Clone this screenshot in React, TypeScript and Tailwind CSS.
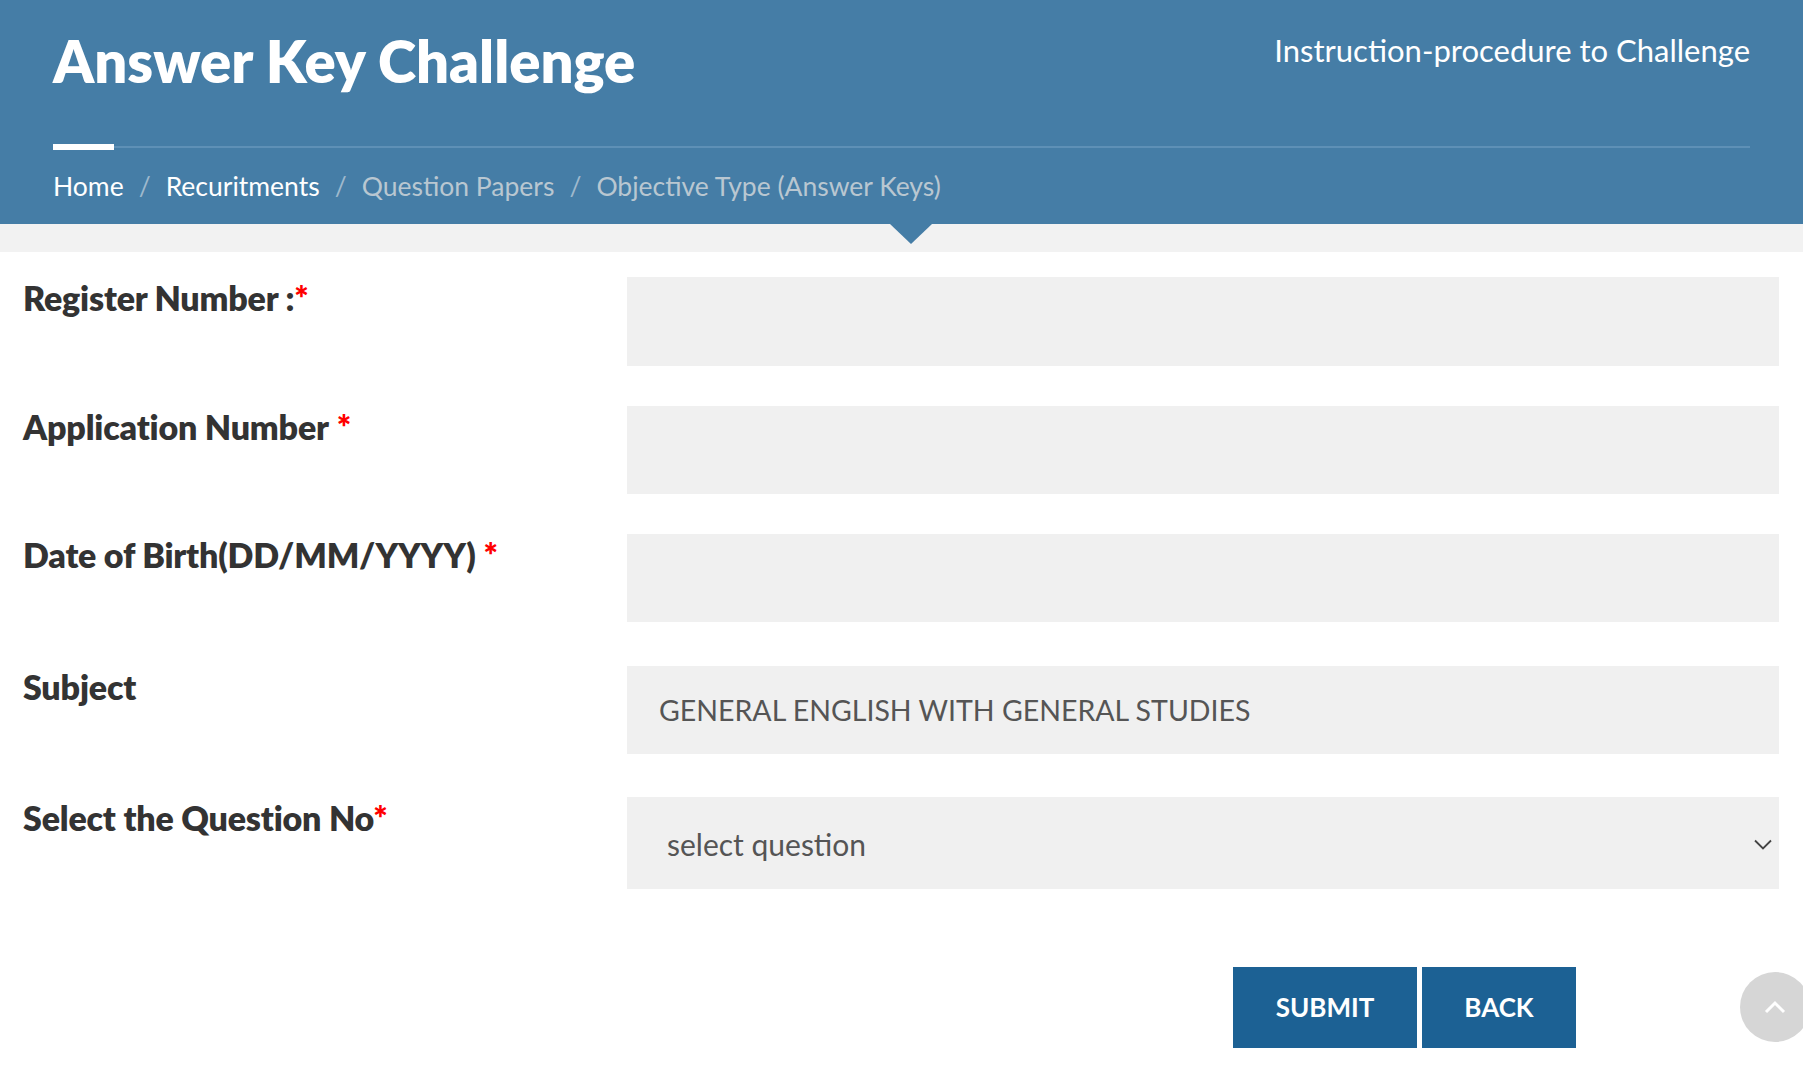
import React from "react";

const font = { fontFamily: "Lato, 'Noto Sans', sans-serif" };

function Row({ label, star, starGap, mt, h, children }: { label: string; star?: boolean; starGap?: boolean; mt: string; h: string; children?: React.ReactNode }) {
  return (
    <div className={`flex ${mt}`}>
      <div className="w-[627px] pl-[23px] pt-[1px] text-[34px] font-extrabold text-[#333333] leading-[40px] tracking-[-0.2px]">
        {label}
        {star && <span className={`text-[#ff0000] ${starGap ? "ml-[8px]" : ""}`}>*</span>}
      </div>
      <div className={`w-[1152px] ${h} bg-[#f0f0f0] flex items-center`}>{children}</div>
    </div>
  );
}

export default function App() {
  return (
    <div className="w-[1803px] h-[1074px] bg-white overflow-hidden relative" style={font}>
      <header className="bg-[#457da6] h-[224px] px-[53px] pt-[26px]">
        <div className="flex justify-between items-start">
          <h1 className="text-[58px] font-extrabold text-white leading-[70px]">Answer Key Challenge</h1>
          <a className="text-[31px] text-white leading-[40px] mt-[4px]">Instruction-procedure to Challenge</a>
        </div>
        <div className="flex items-center mt-[48px]">
          <div className="w-[61px] h-[6px] bg-white" />
          <div className="flex-1 h-[2px] bg-[#5e90b6]" />
        </div>
        <nav className="flex items-center text-[26.5px] mt-[18px] leading-[36px]">
          <span className="text-white">Home</span>
          <span className="text-[#9fb9cd] mx-[15px]">/</span>
          <span className="text-white">Recuritments</span>
          <span className="text-[#9fb9cd] mx-[15px]">/</span>
          <span className="text-[#b9c7d1]">Question Papers</span>
          <span className="text-[#9fb9cd] mx-[15px]">/</span>
          <span className="text-[#b9c7d1]">Objective Type (Answer Keys)</span>
        </nav>
      </header>
      <div className="h-[28px] bg-[#f2f2f2] relative">
        <div className="absolute left-[890px] top-0 w-0 h-0 border-l-[21px] border-r-[21px] border-t-[20px] border-l-transparent border-r-transparent border-t-[#457da6]" />
      </div>

      <form className="pt-[25px]">
        <Row label="Register Number :" star mt="" h="h-[89px]" />
        <Row label="Application Number" star starGap mt="mt-[40px]" h="h-[88px]" />
        <Row label="Date of Birth(DD/MM/YYYY)" star starGap mt="mt-[40px]" h="h-[88px]" />
        <Row label="Subject" mt="mt-[44px]" h="h-[88px]">
          <span className="pl-[32px] text-[28.5px] text-[#555555]">GENERAL ENGLISH WITH GENERAL STUDIES</span>
        </Row>
        <Row label="Select the Question No" star mt="mt-[43px]" h="h-[92px]">
          <div className="flex-1 flex items-center justify-between pl-[40px] pr-[7px] pt-[2px]">
            <span className="text-[30px] text-[#555555]">select question</span>
            <svg width="18" height="11" viewBox="0 0 18 11" fill="none" stroke="#444" strokeWidth="1.8">
              <path d="M1 1.5 L9 9.5 L17 1.5" />
            </svg>
          </div>
        </Row>
        <div className="flex mt-[78px] pl-[1233px] gap-[5px]">
          <button type="button" className="w-[184px] h-[81px] bg-[#1c6194] text-white text-[26px] font-bold">SUBMIT</button>
          <button type="button" className="w-[154px] h-[81px] bg-[#1c6194] text-white text-[26px] font-bold">BACK</button>
        </div>
      </form>

      <div className="absolute left-[1740px] top-[972px] w-[70px] h-[70px] rounded-full bg-[#d6d6d6] flex items-center justify-center">
        <svg width="22" height="14" viewBox="0 0 22 14" fill="none" stroke="white" strokeWidth="3">
          <path d="M2 12 L11 3 L20 12" />
        </svg>
      </div>
    </div>
  );
}
